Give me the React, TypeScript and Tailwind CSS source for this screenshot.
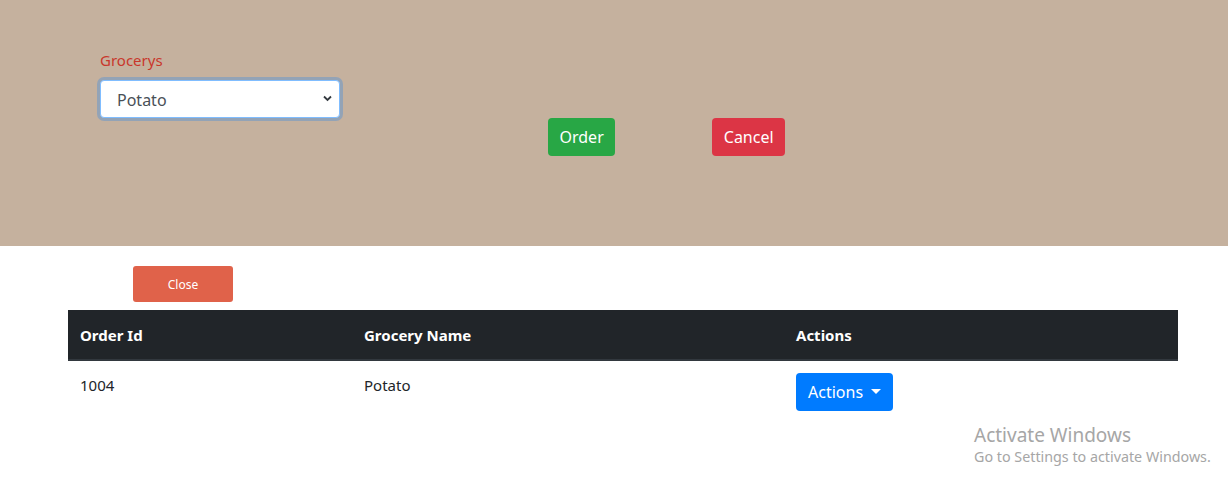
import React from "react";

const font = { fontFamily: '"Segoe UI", "Noto Sans", "Liberation Sans", sans-serif' };

export default function App() {
  return (
    <div className="w-[1228px] h-[478px] bg-white relative overflow-hidden" style={font}>
      {/* Order form */}
      <div className="h-[246px] bg-[#c5b19e] pt-[49px] pl-[100px]">
        <div className="flex">
          <div className="w-[240px]">
            <label className="block text-[15px] text-[#c9372c] leading-[22px] mb-[9px]">Grocerys</label>
            <div className="relative">
              <select
                defaultValue="Potato"
                className="w-[240px] h-[38px] appearance-none rounded-[4px] bg-white border border-[#80bdff] pl-[16px] pt-[1px] text-[16px] text-[#495057] shadow-[0_0_0_3px_rgba(0,123,255,0.25)] outline-none"
              >
                <option>Potato</option>
                <option>Tomato</option>
                <option>Onion</option>
              </select>
              <svg
                className="absolute right-[8px] top-[15px] pointer-events-none"
                width="9"
                height="7"
                viewBox="0 0 9 7"
              >
                <path d="M1 1.5 L4.5 5 L8 1.5" stroke="#343a40" strokeWidth="1.8" fill="none" />
              </svg>
            </div>
          </div>
          <div className="flex pt-[69px] ml-[208px] gap-[97px]">
            <button className="h-[38px] px-[11.5px] rounded-[4px] bg-[#28a745] text-white text-[16px]">Order</button>
            <button className="h-[38px] px-[11.5px] rounded-[4px] bg-[#dc3545] text-white text-[16px]">Cancel</button>
          </div>
        </div>
      </div>

      {/* Orders list */}
      <div className="pt-[20px] px-[68px]">
        <button className="ml-[65px] w-[100px] h-[36px] pt-[1px] rounded-[3px] bg-[#e0624a] text-white text-[12px]">Close</button>
        <table className="mt-[8px] w-[1110px] border-collapse text-left">
          <thead>
            <tr className="bg-[#212529] text-white h-[50px] border-b-2 border-[#32383e]">
              <th className="w-[284px] px-[12px] pt-[2px] font-bold text-[15px]">Order Id</th>
              <th className="w-[432px] px-[12px] pt-[2px] font-bold text-[15px]">Grocery Name</th>
              <th className="px-[12px] pt-[2px] font-bold text-[15px]">Actions</th>
            </tr>
          </thead>
          <tbody>
            <tr className="text-[#212529] text-[15px]">
              <td className="px-[12px] pt-[13px] align-top h-[60px]">1004</td>
              <td className="px-[12px] pt-[13px] align-top">Potato</td>
              <td className="px-[12px] pt-[13px] align-top">
                <button className="h-[38px] px-[12px] -mt-[1px] rounded-[4px] bg-[#007bff] text-white text-[16px] flex items-center gap-[8px]">
                  Actions
                  <svg width="10" height="6" viewBox="0 0 10 6">
                    <path d="M0 0 H10 L5 5 Z" fill="white" />
                  </svg>
                </button>
              </td>
            </tr>
          </tbody>
        </table>
      </div>

      {/* Watermark */}
      <div className="absolute left-[974px] top-[424px] text-[#a6a6a6] leading-tight">
        <div className="text-[19px]">Activate Windows</div>
        <div className="text-[14.3px]">Go to Settings to activate Windows.</div>
      </div>
    </div>
  );
}
